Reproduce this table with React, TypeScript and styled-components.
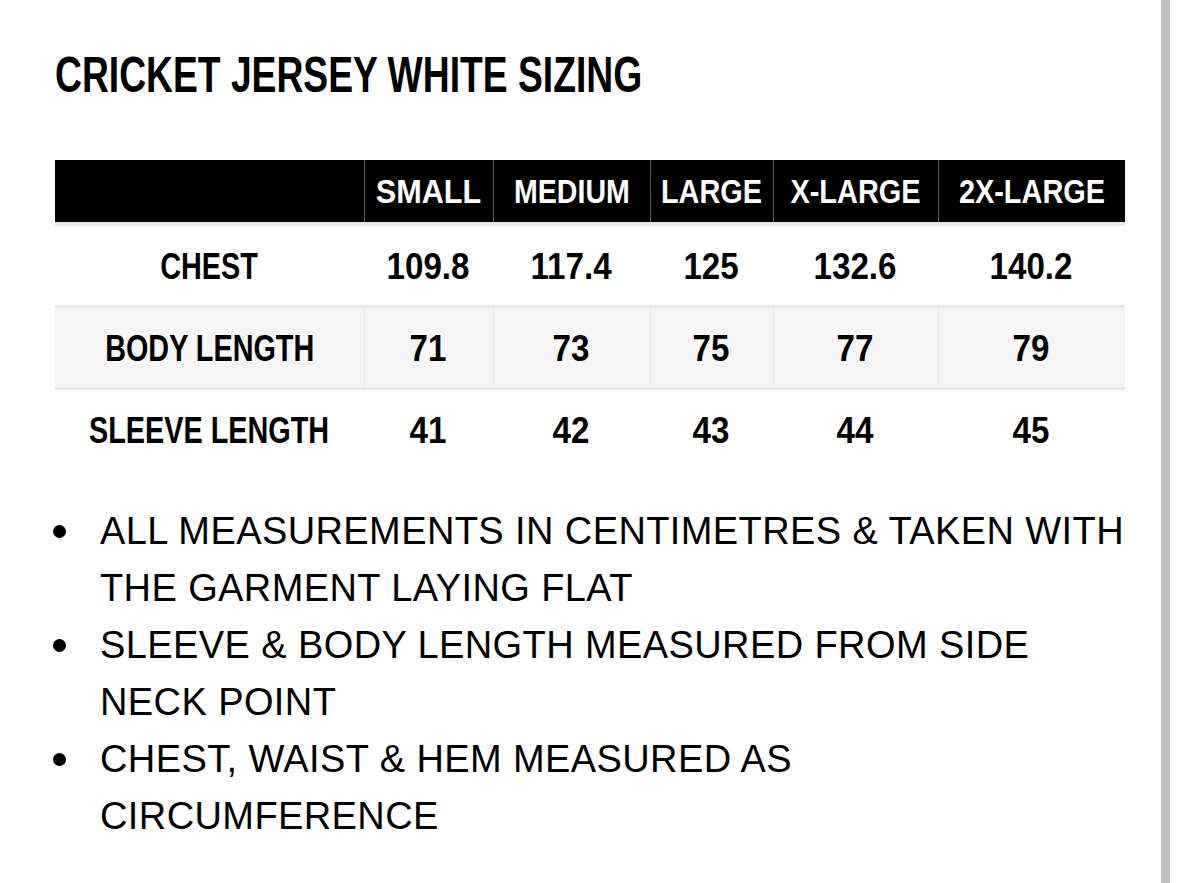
import { Fragment } from 'react';
import styled, { createGlobalStyle } from 'styled-components';

const GlobalStyle = createGlobalStyle`
  html, body {
    margin: 0;
    padding: 0;
    background: #fff;
  }
  body {
    font-family: 'Liberation Sans', Arial, sans-serif;
    color: #000;
  }
`;

// Column widths of the size chart (label + five sizes)
const COLS = '309px 129px 157px 123px 165px 187px';

const Page = styled.div`
  display: flex;
  min-height: 883px;
`;

const Content = styled.main`
  width: 1161px;
  padding: 46px 0 0 55px;
  box-sizing: border-box;
`;

const Rail = styled.div`
  width: 9px;
  background: #c1c1c1;
`;

// Condensed look: Liberation Sans Bold squeezed horizontally
const Squeeze = styled.span<{ $x: number; $origin?: string }>`
  display: inline-block;
  white-space: nowrap;
  transform: scaleX(${(p) => p.$x});
  transform-origin: ${(p) => p.$origin ?? 'center'};
`;

const Title = styled.h1`
  margin: 0 0 56px;
  font-family: 'Liberation Sans', Arial, sans-serif;
  font-weight: 700;
  font-size: 50px;
  line-height: 58px;
  white-space: nowrap;
`;

const Table = styled.div`
  width: 1070px;
  display: grid;
  grid-template-columns: ${COLS};
`;

const HeadCell = styled.div<{ $first?: boolean }>`
  height: 62px;
  background: #000;
  color: #fff;
  display: flex;
  align-items: center;
  justify-content: center;
  font-weight: 700;
  font-size: 34px;
  box-shadow: ${(p) => (p.$first ? 'none' : 'inset 1px 0 0 #5a5a5a')};
  border-bottom: 4px solid #e8e8e8;
`;

const Cell = styled.div<{ $shade?: boolean; $first?: boolean; $last?: boolean }>`
  height: ${(p) => (p.$last ? '80px' : '82px')};
  background: ${(p) => (p.$shade ? '#f5f5f5' : '#fff')};
  display: flex;
  align-items: center;
  justify-content: center;
  font-weight: 700;
  font-size: 36px;
  padding-top: 2px;
  box-sizing: border-box;
  box-shadow: ${(p) => (p.$first || !p.$shade ? 'none' : 'inset 1px 0 0 #ececec')};
  border-bottom: ${(p) => (p.$last ? 'none' : '3px solid #e8e8e8')};
`;

const Notes = styled.ul`
  margin: 33px 0 0;
  padding: 0;
  list-style: none;
  width: 1075px;
`;

const Note = styled.li`
  position: relative;
  padding-left: 45px;
  font-size: 38px;
  line-height: 57px;
  letter-spacing: 0.4px;

  &::before {
    content: '';
    position: absolute;
    left: -2px;
    top: 22px;
    width: 13px;
    height: 13px;
    border-radius: 50%;
    background: #000;
  }
`;

const sizes: { name: string; x: number }[] = [
  { name: 'SMALL', x: 0.9 },
  { name: 'MEDIUM', x: 0.84 },
  { name: 'LARGE', x: 0.85 },
  { name: 'X-LARGE', x: 0.85 },
  { name: '2X-LARGE', x: 0.85 },
];

const rows: { label: string; values: string[] }[] = [
  { label: 'CHEST', values: ['109.8', '117.4', '125', '132.6', '140.2'] },
  { label: 'BODY LENGTH', values: ['71', '73', '75', '77', '79'] },
  { label: 'SLEEVE LENGTH', values: ['41', '42', '43', '44', '45'] },
];

const notes = [
  'ALL MEASUREMENTS IN CENTIMETRES & TAKEN WITH THE GARMENT LAYING FLAT',
  'SLEEVE & BODY LENGTH MEASURED FROM SIDE NECK POINT',
  'CHEST, WAIST & HEM MEASURED AS CIRCUMFERENCE',
];

export default function App() {
  return (
    <>
      <GlobalStyle />
      <Page>
        <Content>
          <Title>
            <Squeeze $x={0.745} $origin="left">
              CRICKET JERSEY WHITE SIZING
            </Squeeze>
          </Title>
          <Table>
            <HeadCell $first />
            {sizes.map((s) => (
              <HeadCell key={s.name}>
                <Squeeze $x={s.x}>{s.name}</Squeeze>
              </HeadCell>
            ))}
            {rows.map((r, i) => {
              const shade = i === 1;
              const last = i === rows.length - 1;
              return (
                <Fragment key={r.label}>
                  <Cell $first $shade={shade} $last={last}>
                    <Squeeze $x={0.8}>{r.label}</Squeeze>
                  </Cell>
                  {r.values.map((v, j) => (
                    <Cell key={j} $shade={shade} $last={last}>
                      <Squeeze $x={0.92}>{v}</Squeeze>
                    </Cell>
                  ))}
                </Fragment>
              );
            })}
          </Table>
          <Notes>
            {notes.map((n) => (
              <Note key={n}>{n}</Note>
            ))}
          </Notes>
        </Content>
        <Rail />
      </Page>
    </>
  );
}
